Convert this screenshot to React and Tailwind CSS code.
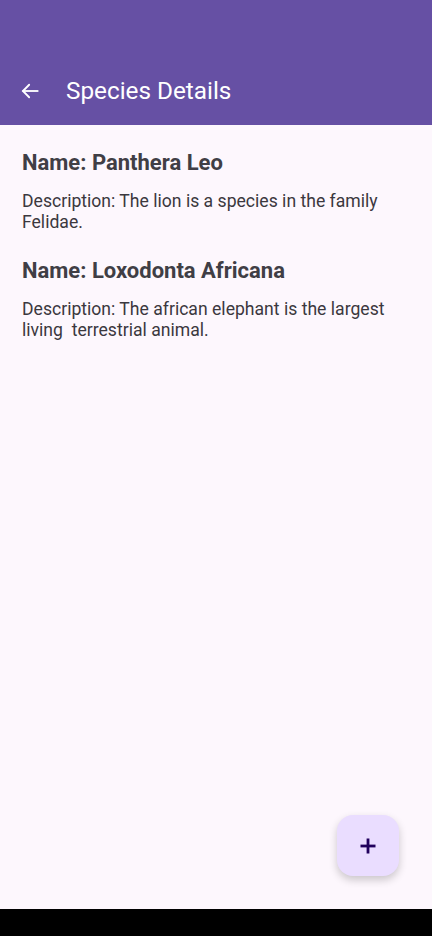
export default function App() {
  return (
    <div className="relative w-[432px] h-[936px] bg-[#fdf7fd] flex flex-col" style={{ fontFamily: 'Roboto, "Noto Sans", sans-serif' }}>
      <div className="h-[125px] bg-[#6650a4] flex items-end shrink-0">
        <div className="h-[70px] w-full flex items-center pl-[20px] pt-[2px]">
          <svg width="20" height="20" viewBox="0 0 24 24" className="text-white" fill="none" stroke="currentColor" strokeWidth="2.2" strokeLinecap="square">
            <path d="M21 12H4" />
            <path d="M11 4.5L3.5 12L11 19.5" strokeLinecap="round" strokeLinejoin="miter" />
          </svg>
          <div className="ml-[26px] text-white text-[24.3px] leading-none">Species Details</div>
        </div>
      </div>
      <div className="flex-1 px-[22px] pt-[26px] text-[#403e45]">
        <div className="text-[22px] font-bold leading-[24px]">Name: Panthera Leo</div>
        <div className="mt-[16px] text-[17.6px] leading-[21px] text-[#3b383e]">Description: The lion is a species in the family Felidae.</div>
        <div className="mt-[26px] text-[22px] font-bold leading-[24px]">Name: Loxodonta Africana</div>
        <div className="mt-[16px] text-[17.6px] leading-[21px] text-[#3b383e] whitespace-pre-wrap">Description: The african elephant is the largest living  terrestrial animal.</div>
      </div>
      <div className="h-[27px] bg-black shrink-0" />
      <button className="absolute left-[337px] top-[815px] w-[62px] h-[61px] rounded-[16px] bg-[#eaddff] flex items-center justify-center shadow-[0_4px_8px_rgba(0,0,0,0.2)]">
        <svg width="16" height="16" viewBox="0 0 16 16" fill="#21005d">
          <rect x="6.6" y="0.5" width="2.8" height="15" />
          <rect x="0.5" y="6.6" width="15" height="2.8" />
        </svg>
      </button>
    </div>
  );
}
